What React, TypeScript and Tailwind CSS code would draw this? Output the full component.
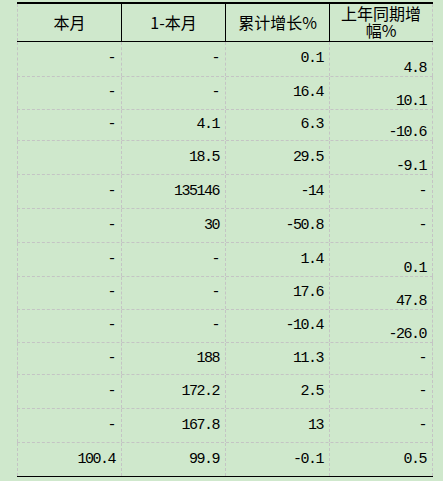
import React from 'react';

type Row = {
  h: string;
  cells: [string, string, string, string];
  low?: boolean; // last column sits at the bottom of the cell
};

const rows: Row[] = [
  { h: 'h-[35px]', cells: ['-', '-', '0.1', '4.8'], low: true },
  { h: 'h-[33px]', cells: ['-', '-', '16.4', '10.1'], low: true },
  { h: 'h-[31px]', cells: ['-', '4.1', '6.3', '-10.6'], low: true },
  { h: 'h-[34px]', cells: ['', '18.5', '29.5', '-9.1'], low: true },
  { h: 'h-[34px]', cells: ['-', '135146', '-14', '-'] },
  { h: 'h-[34px]', cells: ['-', '30', '-50.8', '-'] },
  { h: 'h-[34px]', cells: ['-', '-', '1.4', '0.1'], low: true },
  { h: 'h-[33px]', cells: ['-', '-', '17.6', '47.8'], low: true },
  { h: 'h-[33px]', cells: ['-', '-', '-10.4', '-26.0'], low: true },
  { h: 'h-[32px]', cells: ['-', '188', '11.3', '-'] },
  { h: 'h-[34px]', cells: ['-', '172.2', '2.5', '-'] },
  { h: 'h-[34px]', cells: ['-', '167.8', '13', '-'] },
  { h: 'h-[34px]', cells: ['100.4', '99.9', '-0.1', '0.5'] },
];

const widths = ['w-[105px]', 'w-[104px]', 'w-[104px]', 'w-[103px]'];

const App: React.FC = () => {
  return (
    <div className="w-[443px] h-[481px] bg-[#cfe8cc] pt-[2px] pl-[17px] text-black overflow-hidden">
      {/* header */}
      <div
        className="flex h-[40px] w-[416px] border-t-2 border-b border-black"
        style={{ fontFamily: '"Noto Sans CJK SC", sans-serif' }}
      >
        <div className={`${widths[0]} flex items-center justify-center border-l border-r border-l-[#c4c4c4] [border-left-style:dashed] border-r-black text-[16px] pb-[2px]`}>
          本月
        </div>
        <div className={`${widths[1]} flex items-center justify-center border-r border-black text-[16px] pb-[2px]`}>
          1-本月
        </div>
        <div className={`${widths[2]} flex items-center justify-center border-r border-black text-[16px] pb-[2px]`}>
          累计增长%
        </div>
        <div className={`${widths[3]} flex flex-col items-center justify-center text-center border-r border-[#c4c4c4] [border-right-style:dashed] text-[16px] leading-[17px] pb-[2px]`}>
          <span>上年同期增</span>
          <span>幅%</span>
        </div>
      </div>

      {/* body */}
      {rows.map((row, ri) => {
        const last = ri === rows.length - 1;
        return (
          <div
            key={ri}
            className={`flex ${row.h} w-[416px] border-b ${
              last ? 'border-black' : 'border-[#c4c4c4] border-dashed'
            }`}
            style={{ fontFamily: '"Liberation Mono", monospace' }}
          >
            {row.cells.map((v, ci) => (
              <div
                key={ci}
                className={`${widths[ci]} flex justify-end pr-[6px] text-[15px] tracking-[-1.5px] border-r border-dashed border-[#c4c4c4] ${
                  ci === 0 ? 'border-l' : ''
                } ${ci === 3 && row.low ? 'items-end leading-[12px] pb-[1px]' : 'items-center leading-[16px]'}`}
              >
                {v}
              </div>
            ))}
          </div>
        );
      })}
    </div>
  );
};

export default App;
